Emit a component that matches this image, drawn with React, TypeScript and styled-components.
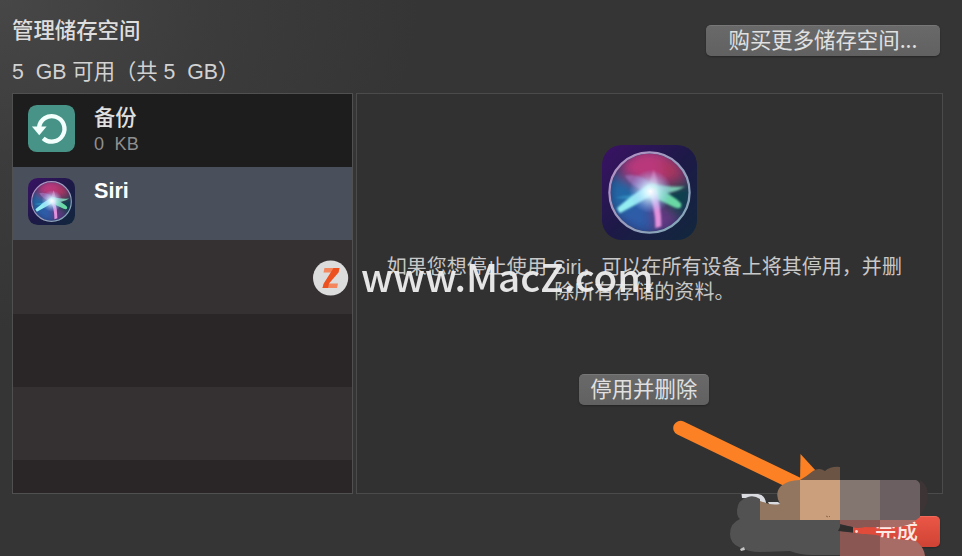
import React from "react";
import styled, { createGlobalStyle } from "styled-components";

const Global = createGlobalStyle`
  * { box-sizing: border-box; }
  body {
    margin: 0;
    background: #343434;
    font-family: "Inter", "Noto Sans CJK SC", sans-serif;
    overflow: hidden;
  }
`;

const Window = styled.main`
  position: relative;
  width: 962px;
  height: 556px;
  padding: 0 19px 0 12px;
  overflow: hidden;
  background: radial-gradient(ellipse 420px 330px at 0 0, #474747, rgba(64, 64, 64, 0.6) 50%, transparent), #353535;
`;

const Header = styled.header`
  height: 93px;
  display: flex;
  justify-content: space-between;
  padding-right: 3px;
`;

const Heading = styled.div`
  padding-top: 14px;
  white-space: pre;
`;

const Title = styled.h1`
  margin: 0;
  font: 500 21.4px/30px "Noto Sans CJK SC", sans-serif;
  color: #dedede;
`;

const Quota = styled.p`
  margin: 13px 0 0;
  font: 400 21.3px/30px "Liberation Sans", "Noto Sans CJK SC", sans-serif;
  color: #d2d2d2;
`;

const Button = styled.button<{ $w: number; $primary?: boolean }>`
  width: ${(p) => p.$w}px;
  height: 31px;
  padding: 0 0 4px;
  border: 0;
  border-radius: 5px;
  border-top: 1px solid ${(p) => (p.$primary ? "#ef6a58" : "#777")};
  background: ${(p) => (p.$primary ? "linear-gradient(#ea5646, #cf4334)" : "linear-gradient(#696969, #616161)")};
  box-shadow: 0 1px 2px rgba(0, 0, 0, 0.3);
  color: ${(p) => (p.$primary ? "#fbe9e6" : "#e0e0e0")};
  font: ${(p) => (p.$primary ? 500 : 400)} 21.4px/26px "Noto Sans CJK SC", sans-serif;
  white-space: nowrap;
`;

const BuySlot = styled.div`
  padding-top: 25px;
`;

const Panels = styled.div`
  display: flex;
  gap: 3px;
  height: 401px;
`;

const List = styled.ul`
  width: 341px;
  margin: 0;
  padding: 0;
  list-style: none;
  border: 1px solid #505050;
  overflow: hidden;
  display: grid;
  grid-template-rows: 73px 73px 74px 73px 73px 33px;
`;

const Row = styled.li<{ $bg: string }>`
  display: flex;
  gap: 18px;
  padding: 11px 0 0 15px;
  background: ${(p) => p.$bg};
`;

const RowText = styled.div`
  margin-left: 1px;
  white-space: pre;
`;

const RowTitle = styled.div<{ $latin?: boolean }>`
  margin-top: ${(p) => (p.$latin ? 0 : -2)}px;
  font: ${(p) => (p.$latin ? '700 21.6px/26px "Liberation Sans"' : '500 21.2px/26px "Noto Sans CJK SC"')}, sans-serif;
  color: ${(p) => (p.$latin ? "#fff" : "#e0e0e0")};
`;

const RowSize = styled.div`
  margin-top: 3px;
  font: 400 18px/24px "Liberation Sans", sans-serif;
  letter-spacing: 0.2px;
  color: #8f8f8f;
`;

const Detail = styled.section`
  width: 588px;
  border: 1px solid #4b4b4b;
  background: #313131;
  display: flex;
  flex-direction: column;
  align-items: center;
  padding: 51px 0 0 1px;
`;

const Description = styled.p`
  width: 530px;
  margin: 15px 0 69px;
  padding-right: 11px;
  text-align: center;
  white-space: pre;
  color: #c8c8c8;
  font: 400 20.05px/25px "Liberation Sans", "Noto Sans CJK SC", sans-serif;
`;

const RemoveSlot = styled.div`
  padding-right: 12px;
`;

const Footer = styled.footer`
  display: flex;
  justify-content: flex-end;
  padding: 22px 3px 0 0;
`;

const Watermark = styled.div`
  position: absolute;
  left: 313px;
  top: 248px;
  height: 60px;
  display: flex;
  align-items: center;
  gap: 12px;
  color: #ededed;
  font: 500 38.6px/54px "Noto Sans CJK SC", sans-serif;
  opacity: 0.96;
`;

const WatermarkText = styled.span`
  margin-top: -6px;
`;

const Overlay = styled.svg`
  position: absolute;
  left: 660px;
  top: 410px;
`;

const BackupIcon = () => (
  <svg width="47" height="47" viewBox="0 0 48 48">
    <rect width="48" height="48" rx="9" fill="#479387" />
    <path d="M11.3 23 A13 13 0 1 1 15.5 34" fill="none" stroke="#f2fffc" strokeWidth="4.4" />
    <path d="M4 22 H19 L11.5 31 Z" fill="#f2fffc" />
  </svg>
);

const SiriIcon = ({ size, id }: { size: number; id: string }) => (
  <svg width={size} height={size} viewBox="0 0 96 96">
    <defs>
      <linearGradient id={`${id}-bg`} x1="0" y1="0" x2="1" y2="1">
        <stop offset="0" stopColor="#3b1265" />
        <stop offset=".5" stopColor="#1d1947" />
        <stop offset="1" stopColor="#11283d" />
      </linearGradient>
      <radialGradient id={`${id}-glow`}>
        <stop offset="0" stopColor="#fff" />
        <stop offset=".3" stopColor="#d4f4ff" stopOpacity=".85" />
        <stop offset="1" stopColor="#8fb6ff" stopOpacity="0" />
      </radialGradient>
      <linearGradient id={`${id}-ring`} x1="0" y1="0" x2="1" y2="1">
        <stop offset="0" stopColor="#b78fc5" />
        <stop offset="1" stopColor="#7faab7" />
      </linearGradient>
      <filter id={`${id}-soft`} x="-30%" y="-30%" width="160%" height="160%">
        <feGaussianBlur stdDeviation="6" />
      </filter>
      <filter id={`${id}-edge`}>
        <feGaussianBlur stdDeviation="1" />
      </filter>
      <clipPath id={`${id}-clip`}>
        <circle cx="48" cy="48" r="39.5" />
      </clipPath>
    </defs>
    <rect width="96" height="96" rx="20" fill={`url(#${id}-bg)`} />
    <g clipPath={`url(#${id}-clip)`}>
      <rect width="96" height="96" fill="#263066" />
      <g filter={`url(#${id}-soft)`}>
        <path d="M48 45 L16 26 Q28 2 51 4 Q76 7 86 32 Z" fill="#b9397b" />
        <path d="M58 15 Q74 15 84 31 L65 37Z" fill="#a63657" />
        <path d="M48 48 L10 30 Q2 56 15 72 Z" fill="#2267a6" />
        <path d="M48 48 L15 72 Q26 89 52 90 Z" fill="#2e5ba8" />
        <path d="M48 48 L55 90 Q69 88 77 75 Z" fill="#663984" />
        <path d="M48 48 L90 34 Q95 58 78 76 Z" fill="#103f4d" />
      </g>
      <g filter={`url(#${id}-edge)`}>
        <path d="M44 48 Q50 34 52 25 Q57 34 56 48Z" fill="#dc6fab" opacity=".85" />
        <path d="M23 31 Q39 27 55 43 L46 47 Q31 44 23 31Z" fill="#a881ce" opacity=".55" />
        <path d="M13 53 Q30 52 46 45 L48 51 Q31 56 13 53Z" fill="#3aaed0" opacity=".6" />
        <path d="M15 64 Q32 49 48 40 L53 49 Q35 60 18 69Z" fill="#94edf2" />
        <path d="M50 39 Q66 43 84 42 Q72 50 52 50Z" fill="#8ae9c6" opacity=".8" />
        <path d="M50 41 Q71 50 80 59 Q81 66 73 63 L50 52Z" fill="#6bd8a4" />
        <path d="M46 45 L54 45 Q60 62 60 82 L54 84 Q54 63 46 45Z" fill="#e391dc" />
      </g>
      <circle cx="49" cy="47" r="22" fill={`url(#${id}-glow)`} />
    </g>
    <circle cx="48" cy="48" r="40.5" fill="none" stroke={`url(#${id}-ring)`} strokeWidth="2.3" />
  </svg>
);

const ZBadge = () => (
  <svg width="36" height="36" viewBox="0 0 36 36">
    <circle cx="17.6" cy="18" r="17.6" fill="#e3e3e3" />
    <path d="M11.5 8 H26.5 L25.2 12.5 H10.5Z" fill="#fb8a5f" />
    <path d="M11 23.5 H25 L24 28 H9.5Z" fill="#fb8a5f" />
    <path d="M20.5 8 H26.5 L25.5 12.5 L16 23.5 L15 28 H9.5 L10.7 23.5Z" fill="#f4521e" />
  </svg>
);

const Redaction = () => (
  <Overlay width="302" height="146" viewBox="0 0 302 146">
    <path d="M20.5 18 L145 78" stroke="#fb8124" strokeWidth="14.5" strokeLinecap="round" />
    <path d="M140.5 44 L157 62 L151 75 L140 72Z" fill="#fb8124" />
    <path d="M81.5 84 H98 Q105 85 106 93 L99 92 Q97 88 82 88Z M108 92 H118 L123 96 H110Z" fill="#d9dbe0" />
    <path d="M260 70 Q268 75 268 86 Q268 96 260 105Z" fill="#3d3535" />
    <path d="M140 70 Q147 66 153 61 Q159 57 165 61 Q171 56 180 57 V70Z" fill="#6b5444" />
    <path d="M100 110 V91 Q111 96 120 94 Q114 83 121 76 Q128 70 140 70 V110Z" fill="#93765f" />
    <path d="M140 70 H180 V110 H140Z" fill="#cc9f7c" />
    <path d="M180 70 H220 V110 H180Z" fill="#837570" />
    <path d="M220 70 H256 Q260 72 260 75 V107 L256 110 H220Z" fill="#6b5f61" />
    <path d="M100 89 Q94 85 88 87 Q77 90 77 101 Q77 107 80 109 Q70 113 70 124 Q70 133 79 137 Q88 142 100 142 L130 141 Q140 145 152 145 H180 V110 H100Z" fill="#525252" />
    <path d="M180 110 H220 V117 L196 118 L180 114Z" fill="#8a5753" />
    <path d="M220 110 H256 Q252 115 239 117 H220Z" fill="#a76c66" />
    <path d="M180 121 L195 123 L216 125 L220 126 V146 H180Z" fill="#8a5753" />
    <path d="M220 127 L237 129 L256 131 Q264 137 265 146 H220Z" fill="#a76c66" />
    <path d="M178 121 L181 115 L193 117 L193 122Z" fill="#302d2d" />
    <path d="M193 121 L205 117 L215 118 V124 L202 124Z" fill="#e14b3a" />
    <circle cx="196.5" cy="121.5" r="1.4" fill="#ffd9d4" />
    <path d="M80 139 L84 137 L85 140 L81 141Z" fill="#c5c5c5" />
    <path d="M166 106 l2 1 M169 107 l1 -1" stroke="#69513f" strokeWidth=".7" />
  </Overlay>
);

export default function App() {
  return (
    <>
      <Global />
      <Window>
        <Header>
          <Heading>
            <Title>管理储存空间</Title>
            <Quota>{"5  GB 可用（共 5  GB）"}</Quota>
          </Heading>
          <BuySlot>
            <Button $w={234}>购买更多储存空间...</Button>
          </BuySlot>
        </Header>
        <Panels>
          <List>
            <Row $bg="#1d1d1d">
              <BackupIcon />
              <RowText>
                <RowTitle>备份</RowTitle>
                <RowSize>{"0  KB"}</RowSize>
              </RowText>
            </Row>
            <Row $bg="#49505b">
              <SiriIcon size={47} id="small" />
              <RowText>
                <RowTitle $latin>Siri</RowTitle>
              </RowText>
            </Row>
            <Row $bg="#353031" />
            <Row $bg="#2a2627" />
            <Row $bg="#353031" />
            <Row $bg="#2a2627" />
          </List>
          <Detail>
            <SiriIcon size={95} id="large" />
            <Description>{"如果您想停止使用 Siri，可以在所有设备上将其停用，并删\n除所有存储的资料。"}</Description>
            <RemoveSlot>
              <Button $w={130}>停用并删除</Button>
            </RemoveSlot>
          </Detail>
        </Panels>
        <Footer>
          <Button $w={87} $primary>完成</Button>
        </Footer>
        <Watermark>
          <ZBadge />
          <WatermarkText>www.MacZ.com</WatermarkText>
        </Watermark>
        <Redaction />
      </Window>
    </>
  );
}
